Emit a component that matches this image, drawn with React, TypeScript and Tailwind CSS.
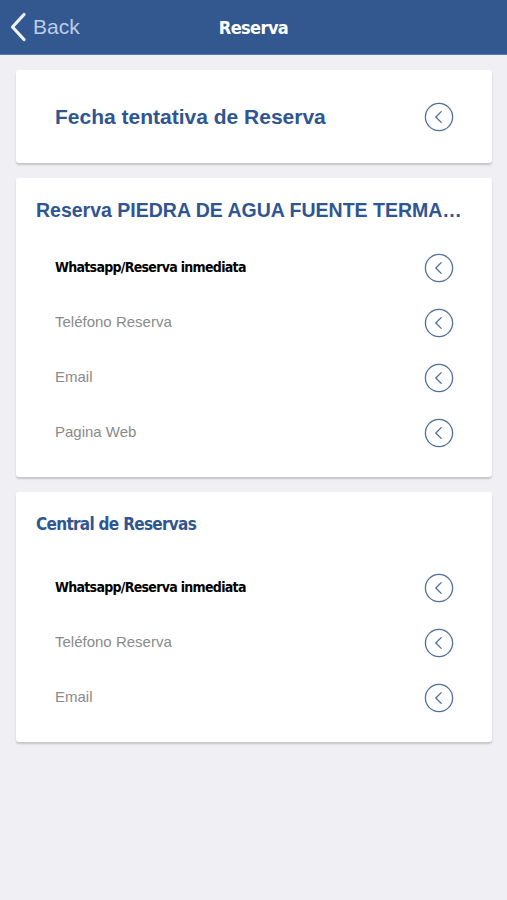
type Row = { label: string; strong?: boolean }

const piedraRows: Row[] = [
  { label: 'Whatsapp/Reserva inmediata', strong: true },
  { label: 'Teléfono Reserva' },
  { label: 'Email' },
  { label: 'Pagina Web' },
]

const centralRows: Row[] = [
  { label: 'Whatsapp/Reserva inmediata', strong: true },
  { label: 'Teléfono Reserva' },
  { label: 'Email' },
]

function CircleArrow() {
  return (
    <svg width="30" height="30" viewBox="0 0 30 30" className="shrink-0">
      <circle cx="15" cy="15" r="13.6" fill="none" stroke="#4f6e9c" strokeWidth="1.3" />
      <path d="M17.2 9.6 L11.8 15 L17.2 20.4" fill="none" stroke="#4f6e9c" strokeWidth="1.3" strokeLinecap="round" strokeLinejoin="round" />
    </svg>
  )
}

function OptionRow({ label, strong }: Row) {
  return (
    <div className="flex items-center justify-between h-[55px] pl-[39px] pr-[38px]">
      <span
        className={
          strong
            ? "text-[14px] font-bold text-black font-['DejaVu_Sans_Condensed',sans-serif] tracking-[-0.7px]"
            : "text-[15px] text-[#8a8a8a] font-['Liberation_Sans',sans-serif]"
        }
      >
        {label}
      </span>
      <CircleArrow />
    </div>
  )
}

function Section({ title, rows, condensed }: { title: string; rows: Row[]; condensed?: boolean }) {
  return (
    <section className={`bg-white rounded-[3px] shadow-[0_2px_2px_rgba(0,0,0,0.18)] pt-[20px] pb-[17px]`}>
      <h2
        className={
          condensed
            ? "px-5 leading-[24px] text-[17px] font-bold text-[#2f5592] truncate font-['DejaVu_Sans_Condensed',sans-serif] tracking-[-0.7px]"
            : "px-5 leading-[24px] text-[19.5px] font-bold text-[#2f5592] truncate font-['Liberation_Sans',sans-serif]"
        }
      >
        {title}
      </h2>
      <div className={condensed ? 'mt-[24px]' : 'mt-[18px]'}>
        {rows.map((r) => (
          <OptionRow key={r.label} {...r} />
        ))}
      </div>
    </section>
  )
}

export default function App() {
  return (
    <div className="min-h-[900px] bg-[#efeff4]">
      {/* Nav bar */}
      <header className="relative h-[55px] bg-[#33578f] border-b border-[#5a7bb0] flex items-center">
        <button className="flex items-center pl-[9px]">
          <svg width="18" height="30" viewBox="0 0 18 30">
            <path d="M15 2.5 L3.5 15 L15 27.5" fill="none" stroke="#eef3fb" strokeWidth="3.2" strokeLinecap="round" strokeLinejoin="round" />
          </svg>
          <span className="ml-[6px] text-[21px] text-[#bccde8] font-['Liberation_Sans',sans-serif]">Back</span>
        </button>
        <h1 className="absolute left-1/2 -translate-x-1/2 text-[18px] font-bold text-white font-['DejaVu_Sans_Condensed',sans-serif] tracking-[-0.6px]">
          Reserva
        </h1>
      </header>

      <main className="pl-[16px] pr-[15px] pt-[15px] flex flex-col gap-[15px]">
        <section className="bg-white rounded-[3px] shadow-[0_2px_2px_rgba(0,0,0,0.18)] h-[93px] flex items-center justify-between pl-[39px] pr-[38px]">
          <span className="text-[21px] font-bold text-[#2f5592] font-['Liberation_Sans',sans-serif]">
            Fecha tentativa de Reserva
          </span>
          <CircleArrow />
        </section>

        <Section title="Reserva PIEDRA DE AGUA FUENTE TERMAL Y SPA" rows={piedraRows} />
        <Section title="Central de Reservas" rows={centralRows} condensed />
      </main>
    </div>
  )
}
